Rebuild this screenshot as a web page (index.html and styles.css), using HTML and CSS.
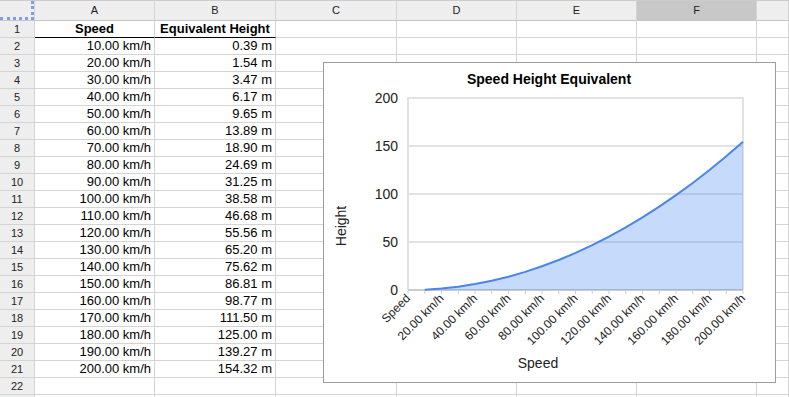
FILE: index.html
```html
<!DOCTYPE html>
<html lang="en">
<head>
    <meta charset="UTF-8">
    <title>Speed Height Equivalent</title>
    <link rel="stylesheet" href="styles.css">
</head>
<body>
    <div id="sheet" class="sheet"></div>

    <div class="chart">
        <svg width="451" height="319" viewBox="0 0 451 319">
            <g transform="translate(-1,-1)">
                <text class="chart-title" x="226" y="22" text-anchor="middle">Speed Height Equivalent</text>

                <g id="grid"></g>
                <polygon id="area" class="area"></polygon>
                <polyline id="line" class="line"></polyline>
                <g id="ticks"></g>
                <g id="yLabels"></g>
                <g id="xLabels"></g>

                <text class="axis-title" x="0" y="0" text-anchor="middle" transform="translate(23,164) rotate(-90)">Height</text>
                <text class="axis-title" x="215" y="306" text-anchor="middle">Speed</text>
            </g>
        </svg>
    </div>

    <script>
        const heights = [0.39, 1.54, 3.47, 6.17, 9.65, 13.89, 18.90, 24.69, 31.25, 38.58,
                         46.68, 55.56, 65.20, 75.62, 86.81, 98.77, 111.50, 125.00, 139.27, 154.32];
        const letters = ['A', 'B', 'C', 'D', 'E', 'F', ''];

        // Build the spreadsheet grid
        const sheet = document.getElementById('sheet');

        function addCell(text, cls) {
            const el = document.createElement('div');
            el.className = 'cell ' + cls;
            el.textContent = text;
            sheet.appendChild(el);
        }

        addCell('', 'col-head corner');
        sheet.lastChild.innerHTML = '<div class="freeze"></div>';
        letters.forEach(l => addCell(l, l === 'F' ? 'col-head selected' : 'col-head'));

        // last row only peeks in at the bottom edge, so no number there
        for (let r = 1; r <= 23; r++) {
            addCell(r <= 22 ? r : '', 'row-head');
            let a = '', b = '';
            if (r === 1) {
                addCell('Speed', 'title-cell');
                addCell('Equivalent Height', 'title-cell');
            } else {
                if (r <= 21) {
                    a = ((r - 1) * 10).toFixed(2) + ' km/h';
                    b = heights[r - 2].toFixed(2) + ' m';
                }
                addCell(a, '');
                addCell(b, '');
            }
            for (let c = 2; c < letters.length; c++) addCell('', '');
        }

        // Chart
        const NS = 'http://www.w3.org/2000/svg';
        const plotLeft = 85, plotRight = 420, plotTop = 36, plotBottom = 228;
        const step = (plotRight - plotLeft) / 20;
        const yOf = h => plotBottom - h * (plotBottom - plotTop) / 200;

        function svgEl(tag, attrs, parent, text) {
            const el = document.createElementNS(NS, tag);
            for (const k in attrs) el.setAttribute(k, attrs[k]);
            if (text !== undefined) el.textContent = text;
            document.getElementById(parent).appendChild(el);
        }

        [200, 150, 100, 50].forEach(v => {
            svgEl('line', {x1: plotLeft, x2: plotRight, y1: yOf(v), y2: yOf(v), class: 'gridline'}, 'grid');
        });
        svgEl('line', {x1: plotLeft, x2: plotLeft, y1: plotTop - 1, y2: plotBottom, class: 'gridline'}, 'grid');
        svgEl('line', {x1: plotRight, x2: plotRight, y1: plotTop - 1, y2: plotBottom, class: 'gridline'}, 'grid');

        [200, 150, 100, 50, 0].forEach(v => {
            svgEl('text', {x: 75, y: yOf(v) + 5, 'text-anchor': 'end', class: 'y-label'}, 'yLabels', v);
        });

        const pts = heights.map((h, i) => (plotLeft + (i + 1) * step).toFixed(2) + ',' + yOf(h).toFixed(2));
        document.getElementById('line').setAttribute('points', pts.join(' '));
        document.getElementById('area').setAttribute('points',
            (plotLeft + step) + ',' + plotBottom + ' ' + pts.join(' ') + ' ' + plotRight + ',' + plotBottom);

        svgEl('line', {x1: plotLeft, x2: plotRight, y1: plotBottom, y2: plotBottom, class: 'baseline'}, 'grid');

        for (let i = 0; i <= 20; i++) {
            const x = plotLeft + i * step;
            svgEl('line', {x1: x, x2: x, y1: plotBottom + 1, y2: plotBottom + 4, class: 'tick'}, 'ticks');
            if (i % 2 === 0) {
                const label = i === 0 ? 'Speed' : (i * 10).toFixed(2) + ' km/h';
                const ax = x + 3, ay = plotBottom + 9;
                svgEl('text', {x: ax, y: ay, 'text-anchor': 'end', class: 'x-label',
                    transform: `rotate(-45 ${ax} ${ay})`}, 'xLabels', label);
            }
        }
    </script>
</body>
</html>
```

FILE: styles.css
```css
body {
    margin: 0;
    font-family: "Liberation Sans", Arial, sans-serif;
    background: #fff;
    overflow: hidden;
}
.sheet {
    display: grid;
    grid-template-columns: 35px 120px 121px 121px 120px 120px 120px 1fr;
    grid-template-rows: 21px;
    grid-auto-rows: 17px;
}
.cell {
    box-sizing: border-box;
    border-right: 1px solid #d4d4d4;
    border-bottom: 1px solid #d4d4d4;
    padding: 0 3px;
    font-size: 13px;
    line-height: 16px;
    text-align: right;
    white-space: nowrap;
    overflow: hidden;
    color: #000;
}
.col-head {
    background: #eeeeee;
    border-top: 1px solid #cccccc;
    border-bottom-color: #c6c6c6;
    font-size: 11px;
    line-height: 19px;
    text-align: center;
    color: #222;
}
.col-head.selected {
    background: #c8c8c8;
}
.corner {
    padding: 0;
}
.freeze {
    box-sizing: border-box;
    width: 34px;
    height: 19px;
    border-right: 3px dotted #7f9ee9;
    border-bottom: 3px dotted #7f9ee9;
    box-shadow: 1px 1px 0 #c9d6f7;
}
.row-head {
    background: #eeeeee;
    font-size: 11px;
    text-align: center;
    color: #222;
}
.title-cell {
    font-weight: bold;
    text-align: center;
    border-bottom-color: #000;
}
.chart {
    position: absolute;
    left: 323px;
    top: 62px;
    width: 453px;
    height: 321px;
    box-sizing: border-box;
    border: 1px solid #9c9c9c;
    background: #fff;
}
.chart svg {
    display: block;
    font-family: "Liberation Sans", Arial, sans-serif;
}
.chart-title {
    font-size: 14px;
    font-weight: bold;
    fill: #000;
}
.gridline {
    stroke: #e2e2e2;
    stroke-width: 2;
}
.baseline {
    stroke: #cccccc;
    stroke-width: 2;
}
.tick {
    stroke: #cccccc;
    stroke-width: 1;
}
.area {
    fill: #4285f4;
    fill-opacity: 0.3;
}
.line {
    fill: none;
    stroke: #4a86e8;
    stroke-width: 2;
}
.y-label {
    font-size: 14px;
    fill: #222;
}
.x-label {
    font-size: 12px;
    fill: #222;
}
.axis-title {
    font-size: 14px;
    fill: #222;
}
```
